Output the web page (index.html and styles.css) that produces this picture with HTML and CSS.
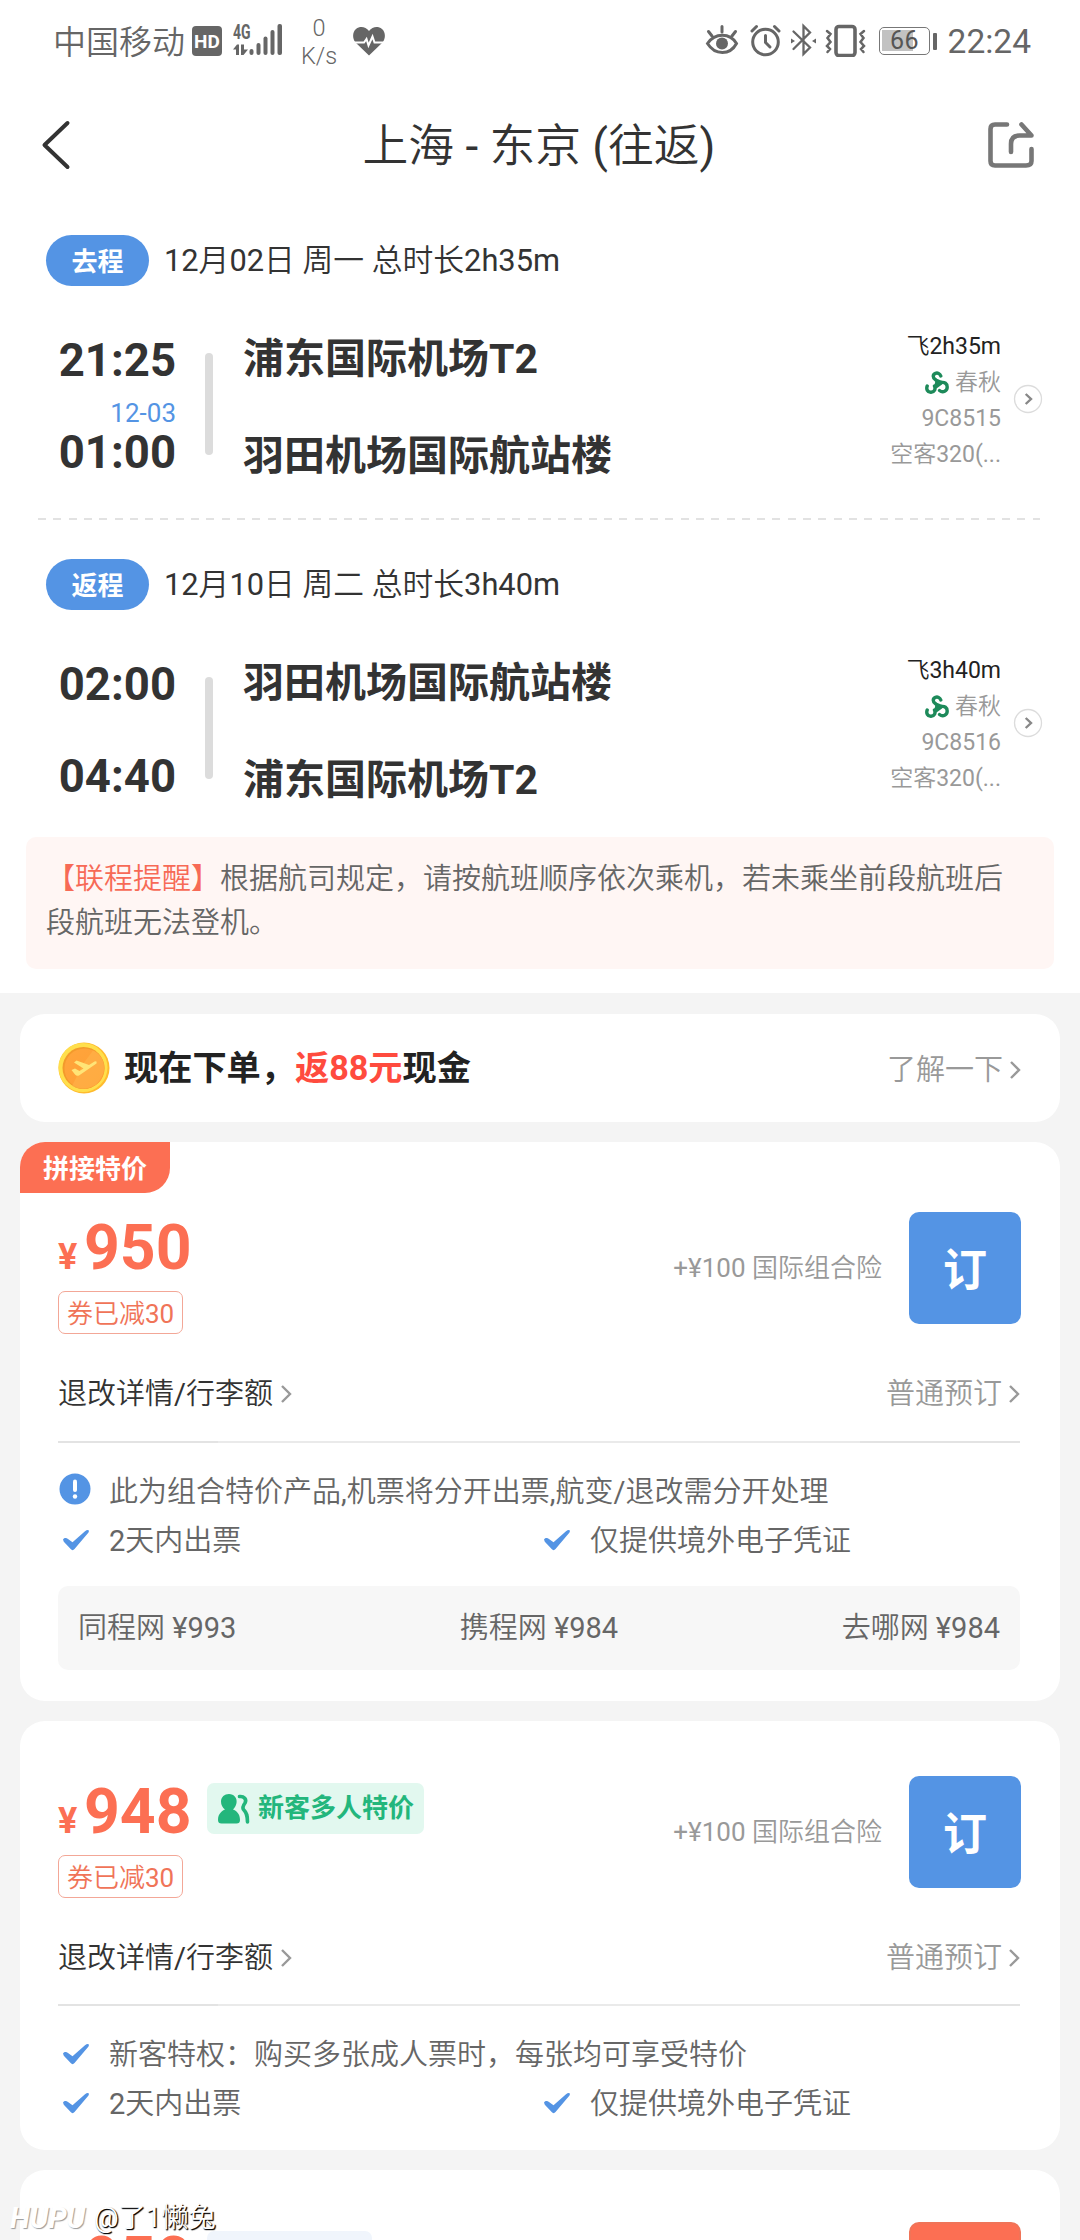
FILE: index.html
```html
<!DOCTYPE html>
<html lang="zh-CN">
<head>
<meta charset="utf-8">
<title>上海 - 东京 (往返)</title>
<link rel="stylesheet" href="styles.css">
</head>
<body>
<svg class="defs" width="0" height="0" aria-hidden="true">
  <symbol id="check" viewBox="0 0 28 22"><path d="M1 10.5 C2.5 8.5 4.5 8.8 6 10 L10.5 13.2 L23 2.2 C25.5 .3 28 1 26.500 3.500 L12.500 20 C11.300 21.500 9.800 21.500 8.700 20 L1.800 12.800 Z" fill="#5494e4"/></symbol>
  <symbol id="chev" viewBox="0 0 12 20"><path d="M2 2 L10 10 L2 18" fill="none" stroke="#999" stroke-width="2.400"/></symbol>
  <symbol id="spring" viewBox="0 0 24 24">
    <g fill="none" stroke="#1d8a5a" stroke-width="3.400" stroke-linecap="round">
      <path d="M15.800 5 C15 2.500 12.500 1.500 10.500 2.300 C7.500 3.500 7.500 7 10.500 8.800"/>
      <path d="M14.500 19.500 C18 22.300 22.200 20 22.200 16 C22.200 12.500 19.500 11 16.500 11.500"/>
      <path d="M2.200 15 C1 18 2.500 21.500 6 21.300 C9.500 21 10.800 18 9.500 15"/>
    </g>
    <path d="M9.500 7.500 L12.500 8 L18.500 10.500 L17 13.500 L11.500 17.500 L8.500 15.500 C10.500 12.500 10.500 10 9.500 7.500Z" fill="#1d8a5a"/>
  </symbol>
  <symbol id="go" viewBox="0 0 30 30"><circle cx="15" cy="15" r="13.500" fill="#fff" stroke="#dcdcdc" stroke-width="1.300"/><path d="M12.700 10 L18 15 L12.700 20" fill="none" stroke="#888" stroke-width="2.400"/></symbol>
</svg>

<div class="screen">
  <section class="trip">
    <div class="status">
      <span class="carrier">中国移动</span>
      <span class="hd">HD</span>
      <span class="net">
        <span class="net-gen">4G</span>
        <svg width="50" height="32" viewBox="0 0 50 32"><g fill="#666"><path d="M0 25.500 L4 20.500 H6 V31 H3 V25.500Z M8 20.500 H11 V25.500 H15 L10.500 31 H8Z"/><rect x="16.500" y="25" width="4" height="6" rx="2"/><rect x="23.500" y="19" width="4" height="12" rx="2"/><rect x="30.500" y="12.500" width="4" height="18.500" rx="2"/><rect x="37.500" y="6" width="4" height="25" rx="2"/><rect x="44.500" y="0" width="4.500" height="31" rx="2"/></g></svg>
      </span>
      <span class="speed"><span>0</span><span>K/s</span></span>
      <svg class="heart" width="32" height="29" viewBox="0 0 32 29"><path d="M16 28.500 L2.500 15.500 C-1 11 -.5 5 3 2 C7 -1.200 12.500 -.5 16 4 C19.500 -.5 25 -1.200 29 2 C32.500 5 33 11 29.500 15.500Z" fill="#666"/><path d="M1 15.500 H11 L13.500 12 L15.500 18.500 L19.500 9.500 L21.500 15.500 H31" fill="none" stroke="#fff" stroke-width="2"/></svg>
      <span class="fill"></span>
      <svg width="174" height="34" viewBox="0 0 174 34" class="sysicons">
        <g fill="none" stroke="#666" stroke-width="3" stroke-linecap="round">
          <path d="M2.500 20.500 C10 9.500 25 9.500 31.500 20.500 C25 32.500 10 32.500 2.500 20.500Z"/>
          <path d="M17 3.500 V9 M3.500 8.500 L7 13 M30.500 8.500 L27 13"/>
          <circle cx="60.500" cy="19" r="12.800"/><path d="M60.500 12.500 V19.500 L65 24" /><path d="M47 8 L51.500 3.500 M74 8 L69.500 3.500"/>
          <path d="M88.500 8.500 L105 24.500 L98.500 31 V3 L105 9.500 L88.500 26" stroke-width="2.300"/>
          <rect x="131" y="3.500" width="19" height="29" rx="3" stroke-width="3.600"/>
          <path d="M122 8 L125.500 11 L122.500 15 L125.500 19 L122 23 L125 26 L122.500 29 M159 8 L155.500 11 L158.500 15 L155.500 19 L159 23 L156 26 L158.500 29" stroke-width="2.500"/>
        </g>
        <g fill="#666"><circle cx="17" cy="20.500" r="6"/><path d="M86 15.500 L90 18 L86 20.500Z M111 15.500 L107 18 L111 20.500Z"/></g>
      </svg>
      <span class="battery"><span class="battery-level"></span><b>66</b></span><span class="nub"></span>
      <span class="clock">22:24</span>
    </div>

    <header class="nav">
      <svg width="32" height="52" viewBox="0 0 32 52"><path d="M27.500 4 L4.500 26 L27.500 48" fill="none" stroke="#333" stroke-width="4" stroke-linecap="round" stroke-linejoin="round"/></svg>
      <h1>上海 - 东京 (往返)</h1>
      <svg width="50" height="50" viewBox="0 0 50 50"><g fill="none" stroke="#777" stroke-width="4.600" stroke-linecap="round" stroke-linejoin="round"><path d="M21 4.500 H9 Q4.500 4.500 4.500 9 V41 Q4.500 45.500 9 45.500 H40 Q45.500 45.500 45.500 41 V29"/><path d="M25 32 V24 Q25 15.500 33.500 15.500 H45.500 L35.500 4.500"/></g></svg>
    </header>

    <article class="leg">
      <div class="leg-head"><span class="pill">去程</span><span>12月02日 周一 总时长2h35m</span></div>
      <div class="leg-body">
        <div class="times"><b>21:25</b><i>12-03</i><b>01:00</b></div>
        <div class="bar"></div>
        <div class="ports"><b>浦东国际机场T2</b><b>羽田机场国际航站楼</b></div>
        <div class="flight"><span class="dur">飞2h35m</span><span class="airline"><svg width="24" height="24"><use href="#spring"/></svg>春秋</span><span>9C8515</span><span>空客320(...</span></div>
        <svg class="go" width="30" height="30"><use href="#go"/></svg>
      </div>
    </article>
    <div class="dash"></div>
    <article class="leg">
      <div class="leg-head"><span class="pill">返程</span><span>12月10日 周二 总时长3h40m</span></div>
      <div class="leg-body">
        <div class="times"><b>02:00</b><i></i><b>04:40</b></div>
        <div class="bar"></div>
        <div class="ports"><b>羽田机场国际航站楼</b><b>浦东国际机场T2</b></div>
        <div class="flight"><span class="dur">飞3h40m</span><span class="airline"><svg width="24" height="24"><use href="#spring"/></svg>春秋</span><span>9C8516</span><span>空客320(...</span></div>
        <svg class="go" width="30" height="30"><use href="#go"/></svg>
      </div>
    </article>
    <p class="notice"><em>【联程提醒】</em>根据航司规定，请按航班顺序依次乘机，若未乘坐前段航班后段航班无法登机。</p>
  </section>

  <main class="cards">
    <section class="card promo">
      <svg width="52" height="52" viewBox="0 0 52 52">
        <defs><linearGradient id="coin" x1="0" y1="0" x2="1" y2="1"><stop offset="0" stop-color="#ffa53c"/><stop offset="1" stop-color="#ff9e34"/></linearGradient></defs>
        <circle cx="26" cy="26" r="25.500" fill="#ffbb2e"/><circle cx="25" cy="25.500" r="24.500" fill="#ffdf4c"/><circle cx="25.500" cy="26" r="21" fill="#f39a2b"/><circle cx="26.500" cy="26.500" r="20" fill="url(#coin)"/>
        <path d="M35 8.500 L25 22 L14 44 Q26 50 38 42.500 Q50 30 44 17 Q41 11 35 8.500Z" fill="#ffb44b" opacity=".6"/>
        <path d="M13.500 28 L17 26.500 L21.500 29 L25.500 26.500 L16 20.500 L18.500 18.500 L31 23 L36.500 19.500 Q39.500 18.500 38.500 21.500 L21 33.500 Q18.500 34.500 17 32.500Z" fill="#ffe477"/>
      </svg>
      <strong>现在下单，<em>返88元</em>现金</strong>
      <span class="fill"></span>
      <span class="link muted">了解一下<svg width="12" height="20"><use href="#chev"/></svg></span>
    </section>

    <section class="card offer tagged">
      <span class="tag">拼接特价</span>
      <div class="offer-top">
        <div class="price-col"><div class="price"><small>¥</small><b>950</b></div><span class="coupon">券已减30</span></div>
        <span class="extra">+¥100 国际组合险</span>
        <span class="book">订</span>
      </div>
      <div class="links"><span class="link">退改详情/行李额<svg width="12" height="20"><use href="#chev"/></svg></span><span class="link muted">普通预订<svg width="12" height="20"><use href="#chev"/></svg></span></div>
      <div class="rule"></div>
      <div class="perks">
        <span class="wide"><svg width="32" height="32" viewBox="0 0 32 32"><circle cx="16" cy="16" r="15.500" fill="#5494e4"/><path d="M16 8.500 V17" stroke="#fff" stroke-width="4" stroke-linecap="round"/><circle cx="16" cy="23.500" r="2.200" fill="#fff"/></svg>此为组合特价产品,机票将分开出票,航变/退改需分开处理</span>
        <span><svg width="28" height="22"><use href="#check"/></svg>2天内出票</span><span><svg width="28" height="22"><use href="#check"/></svg>仅提供境外电子凭证</span>
      </div>
      <div class="compare"><span>同程网 ¥993</span><span>携程网 ¥984</span><span>去哪网 ¥984</span></div>
    </section>

    <section class="card offer">
      <div class="offer-top">
        <div class="price-col"><div class="price"><small>¥</small><b>948</b><span class="badge"><svg width="32" height="32" viewBox="0 0 32 32"><g fill="#23b67c"><path d="M11 1 C16 1 19.500 5 18.500 10 C18 13 16.500 15 15 16.500 C18.500 18 22 20.500 22 27 Q22 30.500 18.500 30.500 H3.500 Q0 30.500 0 27 C0 20.500 4 18 7 16.500 C4.500 14.500 3 12 3 8.500 C3 4 6.500 1 11 1Z"/></g><path d="M21.500 3.500 C26 3 29 6.500 27 10 C25.500 12 24 14 25.500 16.500 C29 20 29.500 23 29.500 29" fill="none" stroke="#23b67c" stroke-width="3.600" stroke-linecap="round"/></svg>新客多人特价</span></div><span class="coupon">券已减30</span></div>
        <span class="extra">+¥100 国际组合险</span>
        <span class="book">订</span>
      </div>
      <div class="links"><span class="link">退改详情/行李额<svg width="12" height="20"><use href="#chev"/></svg></span><span class="link muted">普通预订<svg width="12" height="20"><use href="#chev"/></svg></span></div>
      <div class="rule"></div>
      <div class="perks">
        <span class="wide"><svg width="28" height="22"><use href="#check"/></svg>新客特权：购买多张成人票时，每张均可享受特价</span>
        <span><svg width="28" height="22"><use href="#check"/></svg>2天内出票</span><span><svg width="28" height="22"><use href="#check"/></svg>仅提供境外电子凭证</span>
      </div>
    </section>

    <section class="card offer next">
      <div class="offer-top">
        <div class="price-col"><div class="price"><b>950</b><span class="badge blank"></span></div></div>
        <span class="book hot"></span>
      </div>
    </section>
  </main>
  <div class="watermark"><i>HUPU</i><span>@了1懒兔</span></div>
</div>
</body>
</html>
```
FILE: styles.css
```css
* { box-sizing: border-box; }
body { margin: 0; }
.defs { position: absolute; }
.screen {
  position: relative;
  width: 1080px;
  height: 2240px;
  overflow: hidden;
  background: #f4f4f4;
  color: #333;
  font: 400 29px/44px Roboto, "Noto Sans CJK SC DemiLight", "Noto Sans CJK SC", sans-serif;
}
svg { display: block; flex: none; }
em, i { font-style: normal; }
b, strong, .pill, .tag, .badge, .book { font-family: Roboto, "Noto Sans CJK SC", sans-serif; font-weight: 700; }
.fill { flex: 1; }

/* status bar */
.trip { background: #fff; height: 993px; }
.status { display: flex; align-items: flex-start; height: 84px; padding: 24px 49px 0 53px; color: #666; }
.carrier { width: 139px; font-size: 33px; line-height: 38px; white-space: nowrap; font-weight: 300; }
.hd { width: 30px; height: 30px; margin-top: 2px; border-radius: 4px; background: #666; color: #fff; font: 700 19px/31px Roboto, sans-serif; text-align: center; }
.net { position: relative; margin-left: 11px; width: 50px; }
.net-gen { position: absolute; left: 0; top: -1px; font: 700 20px/18px Roboto, sans-serif; transform: scaleX(.7); transform-origin: left; }
.speed { display: flex; flex-direction: column; width: 42px; margin: -10px 0 0 15px; text-align: center; font-size: 23.500px; line-height: 28px; font-weight: 300; }
.heart { margin: 3px 0 0 13px; }
.sysicons { margin-top: -1px; }
.battery { position: relative; width: 51px; height: 28px; margin-top: 3px; border: 1.500px solid #777; border-radius: 5px; text-align: center; }
.battery-level { position: absolute; left: 2px; top: 2px; width: 31px; height: 21px; background: #c2c2c2; }
.battery b { position: relative; display: block; font-weight: 400; font-size: 25px; line-height: 26px; color: #555; letter-spacing: .5px; }
.nub { width: 4px; height: 17px; margin: 9px 0 0 3px; border-radius: 1px; background: #666; }
.clock { width: 94px; text-align: right; font-size: 33.500px; line-height: 35px; }

/* title bar */
.nav { display: flex; align-items: center; justify-content: space-between; height: 124px; padding: 0 44px 2px 40px; }
.nav h1 { margin: 4px 0 0 20px; font-size: 45.800px; line-height: 60px; font-weight: 400; }

/* flight legs */
.leg { padding-left: 46px; }
.nav + .leg { padding-top: 27px; }
.leg-head { display: flex; align-items: center; height: 51px; gap: 15px; font-size: 30.800px; line-height: 53px; }
.pill { width: 103px; height: 51px; border-radius: 26px; background: #5494e4; color: #fff; font-size: 26px; line-height: 54px; text-align: center; }
.leg-body { display: flex; align-items: flex-start; padding: 43px 37px 37px 0; }
.times { display: grid; grid-template-rows: 51px 41px 51px; width: 130px; margin-top: 6px; text-align: right; }
.times b { font-size: 45.500px; line-height: 51px; }
.times i { padding-top: 13px; font-size: 26px; line-height: 28px; color: #5494e4; }
.bar { width: 8px; height: 102px; margin: 24px 30px 0 29px; border-radius: 4px; background: #dcdcdc; }
.ports { display: flex; flex-direction: column; flex: 1; gap: 47px; margin-top: 5px; font-size: 41px; line-height: 50px; }
.flight { display: flex; flex-direction: column; align-items: flex-end; margin-right: -1px; font-size: 23px; line-height: 36px; color: #999; }
.dur { color: #222; }
.airline { display: flex; align-items: center; gap: 6px; }
.go { margin: 55px 0 0 13px; }
.dash { height: 2px; margin: 0 40px 39px 38px; background: repeating-linear-gradient(90deg, #e2e2e2 0 8px, transparent 8px 15.300px); }
.notice { margin: -5px 26px 0; height: 132px; padding: 20px 40px 20px 20px; border-radius: 10px; background: #fff6f4; color: #666; }
.notice em { color: #f76a56; }

/* cards */
.cards { display: flex; flex-direction: column; gap: 20px; padding: 21px 20px 0; }
.card { flex: none; border-radius: 25px; background: #fff; padding: 0 40px 0 38px; }
.promo { display: flex; align-items: center; height: 108px; }
.promo strong { margin: 0 0 1px 14px; font-size: 34.200px; color: #222; }
.promo strong em { color: #ff4b3e; }
.promo .link { margin-top: 3px; }
.link { display: flex; align-items: center; gap: 7px; line-height: 40px; }
.muted { gap: 6px; margin-right: -1px; color: #999; }
.links .muted { margin-right: 0; }
.offer { padding-top: 55px; padding-bottom: 21px; }
.tagged { padding-top: 0; padding-bottom: 31px; }
.tag { display: block; width: 150px; height: 51px; margin: 0 0 19px -38px; border-radius: 25px 0 25px 0; background: #fc6f53; color: #fff; font-size: 26px; line-height: 54px; text-align: center; }
.offer-top { display: flex; align-items: flex-start; height: 122px; }
.price-col { display: flex; flex-direction: column; align-items: flex-start; flex: 1; }
.price { display: flex; align-items: baseline; height: 64px; margin: 4px 0 11px; color: #fc6f53; line-height: 64px; }
.price small { width: 26px; font-size: 36px; font-weight: 700; }
.price b { width: 107px; font-size: 62.500px; }
.badge { display: flex; align-items: center; align-self: flex-start; gap: 8px; height: 51px; margin: 3px 0 0 16px; padding: 0 10px 0 11px; border-radius: 7px; background: #e2f8ef; color: #23b67c; font-size: 26px; line-height: 55px; }
.coupon { width: 125px; height: 43px; border: 1px solid #f3a797; border-radius: 7px; color: #f07458; font-size: 26px; line-height: 44px; text-align: center; white-space: nowrap; }
.extra { align-self: flex-start; margin-top: 34px; color: #999; font-size: 26px; }
.book { width: 112px; height: 112px; margin: 0 -1px 0 27px; border-radius: 10px; background: #5494e4; color: #fff; font-size: 44px; line-height: 118px; text-align: center; }
.links { display: flex; justify-content: space-between; margin-top: 40px; }
.rule { height: 2px; margin: 26px 0 25px; background: linear-gradient(90deg, #e3e3e3 160px, #eaeaea 160px 802px, #e3e3e3 802px); }
.tagged .rule { margin-top: 27px; }
.perks { display: grid; grid-template-columns: 481px 481px; grid-auto-rows: 49px; color: #666; line-height: 49px; }
.perks span { display: flex; align-items: center; }
.perks svg { margin: 0 19px 4px 4px; }
.perks svg[width="32"] { margin: 0 18px 7px 1px; }
.perks .wide { grid-column: 1 / -1; white-space: nowrap; }
.compare { display: flex; justify-content: space-between; height: 84px; margin-top: 20px; padding: 0 20px; border-radius: 10px; background: #f7f7f7; color: #666; line-height: 85px; }
.next { padding-top: 52px; height: 200px; }
.next .price { margin-top: 6px; padding-left: 26px; }
.blank { width: 165px; background: #f0f5fc; }
.hot { background: #fc6f53; border: 2px solid #f07458; }

.watermark { position: absolute; left: 10px; top: 2198px; display: flex; align-items: center; gap: 5px; height: 40px; color: #fff; font-size: 27.300px; line-height: 40px; text-shadow: 1px 1px 1px #000, 1px 1px 1px #333; }
.watermark i { width: 79px; font-style: italic; font-weight: 700; font-size: 29px; text-shadow: 1px 1px 1px #999; }
```
